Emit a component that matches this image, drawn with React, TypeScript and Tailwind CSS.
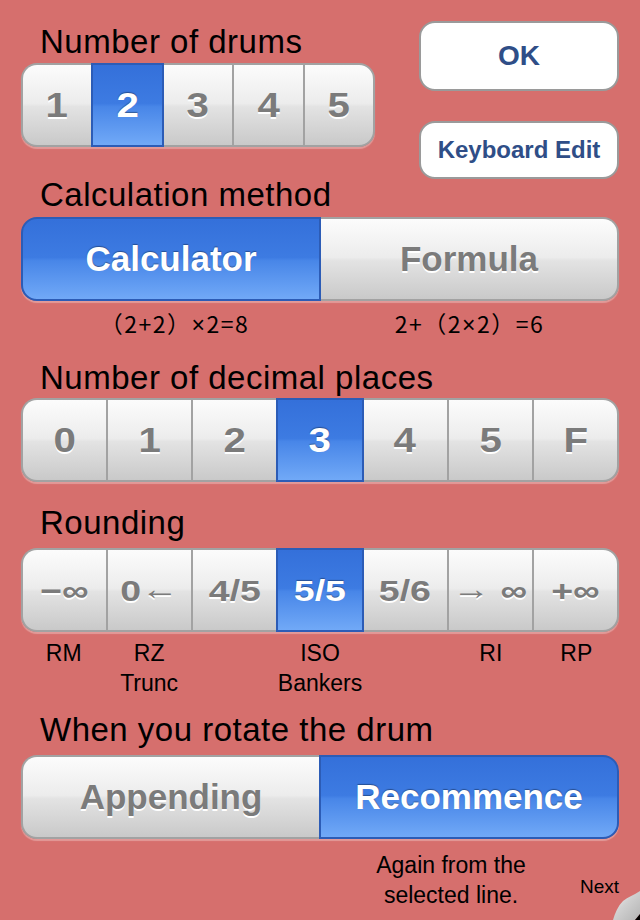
import React from "react";
import clsx from "clsx";

const grey =
  "border-[#a2a2a2] bg-[linear-gradient(to_bottom,#fcfcfc_0%,#ececec_48%,#e3e3e3_52%,#c9c9c9_100%)] text-[#7b7b7b] [text-shadow:0_2px_0_#ffffff]";
const blue =
  "border-[#2c5cb6] bg-[linear-gradient(to_bottom,#3470da_0%,#3d7be2_48%,#4886e8_52%,#71a9f7_100%)] text-white [text-shadow:0_-1px_1px_rgba(0,0,0,0.35)]";

function Segmented({
  items,
  selected,
  textClass,
}: {
  items: React.ReactNode[];
  selected: number;
  textClass: string;
}) {
  return (
    <div className="flex h-[84px] rounded-[16px] shadow-[0_2px_1px_rgba(255,255,255,0.3)]">
      {items.map((item, i) => {
        const sel = i === selected;
        const first = i === 0;
        const last = i === items.length - 1;
        return (
          <div
            key={i}
            className={clsx(
              "flex flex-1 items-center justify-center border-y-2 font-bold",
              sel ? blue : grey,
              first && "rounded-l-[16px] border-l-2",
              last && "rounded-r-[16px] border-r-2",
              !first && i - 1 !== selected && "border-l-2",
              sel && !last && "border-r-2",
              textClass
            )}
          >
            {item}
          </div>
        );
      })}
    </div>
  );
}

function Label({ children, className }: { children: React.ReactNode; className?: string }) {
  return (
    <div className={clsx("ml-[19px] h-[36px] text-[33px] leading-[36px] tracking-[0.5px]", className)}>
      {children}
    </div>
  );
}

const digit = (s: string) => <span className="inline-block scale-x-[1.15]">{s}</span>;
const wide = (n: React.ReactNode) => <span className="inline-block scale-x-[1.25]">{n}</span>;

const roundingNotes: string[][] = [["RM"], ["RZ", "Trunc"], [], ["ISO", "Bankers"], [], ["RI"], ["RP"]];

export default function App() {
  return (
    <div className="relative h-[920px] w-[640px] overflow-hidden bg-[#d66f6d] px-[21px] font-['Liberation_Sans',Arial,sans-serif] text-black">
      {/* drums + buttons */}
      <div className="flex items-start justify-between pt-[21px]">
        <div className="w-[354px]">
          <Label className="mt-[3px]">Number of drums</Label>
          <div className="mt-[3px]">
            <Segmented items={["1", "2", "3", "4", "5"].map(digit)} selected={1} textClass="text-[35px]" />
          </div>
        </div>
        <div className="flex w-[200px] flex-col gap-[30px]">
          <button className="h-[70px] rounded-[16px] border-2 border-[#9a9a9a] bg-white text-[28px] font-bold text-[#2f4e87]">
            OK
          </button>
          <button className="h-[58px] rounded-[16px] border-2 border-[#9a9a9a] bg-white text-[24px] font-bold text-[#2f4e87]">
            Keyboard Edit
          </button>
        </div>
      </div>

      {/* calculation method */}
      <Label className="-mt-[2px]">Calculation method</Label>
      <div className="mt-[4px]">
        <Segmented items={["Calculator", "Formula"]} selected={0} textClass="text-[35px]" />
      </div>
      <div className="mt-[7px] grid h-[30px] grid-cols-2 text-center font-['Noto_Sans_CJK_JP',sans-serif] text-[23px] leading-[30px] tracking-[1.5px]">
        <div className="h-[30px] pl-[8px]">
          （2+2）<span className="font-['Liberation_Sans',sans-serif]">×</span>2=8
        </div>
        <div className="h-[30px]">
          2+（2<span className="font-['Liberation_Sans',sans-serif]">×</span>2）=6
        </div>
      </div>

      {/* decimal places */}
      <Label className="mt-[22px]">Number of decimal places</Label>
      <div className="mt-[2px]">
        <Segmented items={["0", "1", "2", "3", "4", "5", "F"].map(digit)} selected={3} textClass="text-[35px]" />
      </div>

      {/* rounding */}
      <Label className="mt-[23px]">Rounding</Label>
      <div className="mt-[7px]">
        <Segmented
          items={[
            wide("−∞"),
            wide(
              <>
                0<span className="relative -top-[2px] font-normal">←</span>
              </>
            ),
            wide("4/5"),
            wide("5/5"),
            wide("5/6"),
            wide(
              <>
                <span className="relative -top-[2px] font-normal">→</span> ∞
              </>
            ),
            wide("+∞"),
          ]}
          selected={3}
          textClass="text-[30px]"
        />
      </div>
      <div className="mt-[6px] grid grid-cols-7 text-center text-[23px] leading-[30px]">
        {roundingNotes.map((lines, i) => (
          <div key={i} className="whitespace-nowrap">
            {lines.map((l) => (
              <div key={l}>{l}</div>
            ))}
          </div>
        ))}
      </div>

      {/* rotate */}
      <Label className="mt-[14px]">When you rotate the drum</Label>
      <div className="mt-[7px]">
        <Segmented items={["Appending", "Recommence"]} selected={1} textClass="text-[35px]" />
      </div>
      <div className="mt-[11px] flex justify-end">
        <div className="w-[180px] text-center text-[23px] leading-[30px]">
          Again from the
          <br />
          selected line.
        </div>
        <div className="mt-[25px] w-[78px] text-right text-[19px] leading-[24px]">Next</div>
      </div>

      {/* page curl */}
      <svg className="absolute bottom-0 right-0" width="40" height="34" viewBox="0 0 40 34">
        <defs>
          <linearGradient id="curl" x1="0" y1="0" x2="1" y2="1">
            <stop offset="0" stopColor="#f6f6f6" />
            <stop offset="0.45" stopColor="#d0d0d0" />
            <stop offset="1" stopColor="#b4b4b4" />
          </linearGradient>
        </defs>
        <path d="M40 5 C34 9 28 11 23 15 C18 20 15 27 13 34 L35 34 C37 32 38.5 30 40 28 Z" fill="url(#curl)" />
        <path d="M35 34 L40 28 L40 34 Z" fill="#000" />
      </svg>
    </div>
  );
}
